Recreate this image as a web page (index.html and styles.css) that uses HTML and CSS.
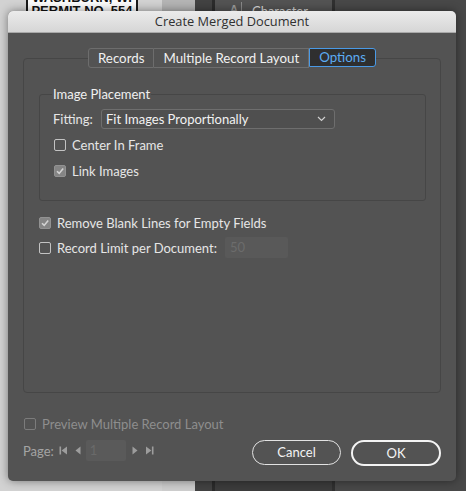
FILE: index.html
```html
<!DOCTYPE html>
<html>
<head>
<meta charset="utf-8">
<link rel="stylesheet" href="styles.css">
</head>
<body>
<div class="desk">
  <div class="col-doc">
    <div class="doc">
      <div class="doc-line first">WASHBURN, WI</div>
      <div class="doc-line">PERMIT NO. 554</div>
    </div>
  </div>
  <div class="col-gray"></div>
  <div class="col-dark"></div>
  <div class="col-panel">
    <span class="glyph">A</span><span class="glyph-sep"></span><span class="panel-name">Character</span>
  </div>
  <div class="col-right"></div>
</div>

<div class="dialog">
  <div class="titlebar">Create Merged Document</div>
  <div class="content">
    <div class="tabs">
      <div class="tab">Records</div>
      <div class="tab">Multiple Record Layout</div>
      <div class="tab tab-active">Options</div>
    </div>
    <div class="panel">
      <div class="group">
        <div class="legend">Image Placement</div>
        <div class="row fit-row">
          <span class="label">Fitting:</span>
          <div class="select">
            <span>Fit Images Proportionally</span>
            <svg class="chev" width="9" height="6" viewBox="0 0 9 6"><path d="M1 1 L4.5 4.5 L8 1" fill="none" stroke="#d0d0d0" stroke-width="1.2"/></svg>
          </div>
        </div>
        <div class="row check-row ind">
          <span class="cb"></span><span class="label">Center In Frame</span>
        </div>
        <div class="row check-row ind gap2">
          <span class="cb cb-on"><svg width="10" height="10" viewBox="0 0 10 10"><path d="M2 5.2 L4.2 7.4 L8.2 2.4" fill="none" stroke="#d2d2d2" stroke-width="1.6"/></svg></span><span class="label">Link Images</span>
        </div>
      </div>
      <div class="row check-row blank-row">
        <span class="cb cb-on"><svg width="10" height="10" viewBox="0 0 10 10"><path d="M2 5.2 L4.2 7.4 L8.2 2.4" fill="none" stroke="#d2d2d2" stroke-width="1.6"/></svg></span><span class="label">Remove Blank Lines for Empty Fields</span>
      </div>
      <div class="row check-row limit-row">
        <span class="cb"></span><span class="label">Record Limit per Document:</span>
        <div class="num-input">50</div>
      </div>
    </div>
  </div>
  <div class="footer">
    <div class="footer-left">
      <div class="row check-row disabled">
        <span class="cb cb-dis"></span><span class="label">Preview Multiple Record Layout</span>
      </div>
      <div class="row pager">
        <span class="label">Page:</span>
        <svg width="9" height="9" viewBox="0 0 9 9"><rect x="0.5" y="0.5" width="1.6" height="8" fill="#9d9d9d"/><path d="M8 0.5 L2.6 4.5 L8 8.5 Z" fill="#9d9d9d"/></svg>
        <svg class="tight" width="6" height="9" viewBox="0 0 6 9"><path d="M5.5 0.5 L0.5 4.5 L5.5 8.5 Z" fill="#9d9d9d"/></svg>
        <div class="page-input">1</div>
        <svg width="6" height="9" viewBox="0 0 6 9"><path d="M0.5 0.5 L5.5 4.5 L0.5 8.5 Z" fill="#9d9d9d"/></svg>
        <svg width="9" height="9" viewBox="0 0 9 9"><path d="M1 0.5 L6.4 4.5 L1 8.5 Z" fill="#9d9d9d"/><rect x="6.9" y="0.5" width="1.6" height="8" fill="#9d9d9d"/></svg>
      </div>
    </div>
    <div class="buttons">
      <div class="btn">Cancel</div>
      <div class="btn btn-default">OK</div>
    </div>
  </div>
</div>
</body>
</html>
```

FILE: styles.css
```css
html, body {
  margin: 0;
  padding: 0;
}
body {
  width: 466px;
  height: 491px;
  overflow: hidden;
  position: relative;
  font-family: "Lato", "Open Sans", sans-serif;
  font-size: 13px;
  color: #e6e6e6;
}

/* ---------- background desktop ---------- */
.desk {
  display: flex;
  height: 491px;
}
.col-doc {
  width: 162px;
  background: #d2d2d2;
}
.doc {
  margin-left: 26px;
  width: 108px;
  height: 11px;
  background: #fbfbfb;
  border-left: 2px solid #1a1a1a;
  border-right: 2px solid #1a1a1a;
  overflow: hidden;
  display: flex;
  flex-direction: column;
  align-items: center;
  font-family: "Liberation Sans", sans-serif;
  font-weight: bold;
  font-size: 13px;
  line-height: 13px;
  color: #111;
}
.doc-line {
  white-space: nowrap;
  flex-shrink: 0;
}
.doc-line.first {
  margin-top: -9px;
}
.col-gray {
  width: 33px;
  background: linear-gradient(#b4b4b4 0 11px, #cdcdcd 11px);
}
.col-dark {
  width: 17px;
  background: #424242;
  border-right: 3px solid #2b2b2b;
}
.col-panel {
  width: 117px;
  background: linear-gradient(#535353 0 470px, #3c3c3c 470px);
  border-right: 3px solid #303030;
  display: flex;
  align-items: flex-start;
  height: 491px;
}
.glyph {
  margin-left: 15px;
  margin-top: 3px;
  font-family: "Liberation Sans", sans-serif;
  font-weight: bold;
  font-size: 11px;
  color: #9a9a9a;
}
.glyph-sep {
  width: 1px;
  height: 11px;
  background: #8a8a8a;
  margin: 2px 0 0 3px;
}
.panel-name {
  margin-left: 10px;
  margin-top: 3px;
  font-size: 13px;
  color: #d8d8d8;
}
.col-right {
  flex: 1;
  background: #484848;
}

/* ---------- dialog window ---------- */
.dialog {
  position: absolute;
  left: 8px;
  top: 11px;
  width: 448px;
  height: 470px;
  background: #535353;
  border-radius: 5px;
  box-shadow: 0 0 10px rgba(0, 0, 0, 0.45);
  display: flex;
  flex-direction: column;
  overflow: hidden;
}
.titlebar {
  height: 21px;
  line-height: 21px;
  text-align: center;
  background: linear-gradient(#ebebeb, #d6d6d6);
  border-bottom: 1px solid #a9a9a9;
  color: #303030;
  font-family: "Open Sans", sans-serif;
  font-size: 12.8px;
  flex-shrink: 0;
}
.content {
  padding: 15px 15px 0 15px;
}
.tabs {
  position: relative;
  z-index: 1;
  display: flex;
  justify-content: center;
  height: 20px;
}
.tab {
  height: 18px;
  line-height: 18px;
  padding: 0 9px;
  border: 1px solid #6d6d6d;
  border-left: none;
  background: #535353;
  color: #f0f0f0;
  font-size: 13.3px;
}
.tab:first-child {
  border-left: 1px solid #6d6d6d;
  border-radius: 3px 0 0 3px;
}
.tab-active {
  background: #2f2f2f;
  border: 1px solid #4a9ae6;
  color: #5cabf2;
  border-radius: 0 3px 3px 0;
  height: 17px;
  line-height: 17px;
}
.panel {
  margin-top: -10px;
  border: 1px solid #464646;
  border-radius: 4px;
  padding: 35px 14px 0 15px;
  box-sizing: border-box;
  height: 335px;
}
.group {
  border: 1px solid #464646;
  border-radius: 3px;
  padding: 0 12px 20px 12px;
}
.legend {
  display: block;
  width: max-content;
  margin: -9px 0 0 0;
  padding: 0 1px;
  line-height: 17px;
  background: #535353;
  color: #f0f0f0;
}
.row {
  display: flex;
  align-items: center;
}
.fit-row {
  margin-top: 6px;
  height: 20px;
}
.fit-row .label {
  width: 48px;
  margin-left: 1px;
}
.select {
  width: 220px;
  height: 18px;
  border: 1px solid #6e6e6e;
  border-radius: 3px;
  background: #4f4f4f;
  display: flex;
  align-items: center;
  justify-content: space-between;
  padding: 0 8px 0 4px;
  color: #f2f2f2;
}
.chev {
  display: block;
}
.check-row {
  height: 18px;
}
.ind {
  margin-top: 7px;
  padding-left: 2px;
}
.gap2 {
  margin-top: 8px;
}
.cb {
  width: 10px;
  height: 10px;
  border: 1px solid #c3c3c3;
  border-radius: 2px;
  margin-right: 6px;
  flex-shrink: 0;
  display: flex;
  align-items: center;
  justify-content: center;
}
.cb-on {
  background: #858585;
  border-color: #929292;
}
.cb-dis {
  border-color: #7c7c7c;
}
.label {
  white-space: nowrap;
}
.blank-row {
  margin-top: 13px;
}
.limit-row {
  margin-top: 5px;
  height: 21px;
}
.num-input {
  width: 58px;
  height: 21px;
  line-height: 21px;
  margin-left: 8px;
  padding-left: 5px;
  background: #595959;
  border-radius: 2px;
  color: #6c6c6c;
}

/* ---------- footer ---------- */
.footer {
  display: flex;
  justify-content: space-between;
  align-items: flex-end;
  padding: 0 15px 15px 15px;
  margin-top: 22px;
}
.footer-left {
  display: flex;
  flex-direction: column;
  padding-bottom: 5px;
}
.disabled {
  color: #8e8e8e;
  margin-left: 1px;
}
.pager {
  margin-top: 7px;
  height: 21px;
  color: #a4a4a4;
}
.pager .label {
  margin-right: 5px;
}
.pager svg {
  margin-right: 7px;
  display: block;
}
.pager svg.tight {
  margin-right: 5px;
}
.page-input {
  width: 40px;
  height: 21px;
  line-height: 21px;
  background: #5a5a5a;
  border-radius: 2px;
  color: #6a6a6a;
  padding-left: 4px;
  box-sizing: border-box;
  margin-right: 6px;
}
.buttons {
  display: flex;
  gap: 10px;
}
.btn {
  width: 87px;
  height: 23px;
  line-height: 23px;
  border: 1.5px solid #e2e2e2;
  border-radius: 13px;
  text-align: center;
  color: #f4f4f4;
  font-size: 13px;
}
.btn-default {
  border: 2px solid #f4f4f4;
  width: 86px;
  height: 22px;
  line-height: 22px;
}
```
